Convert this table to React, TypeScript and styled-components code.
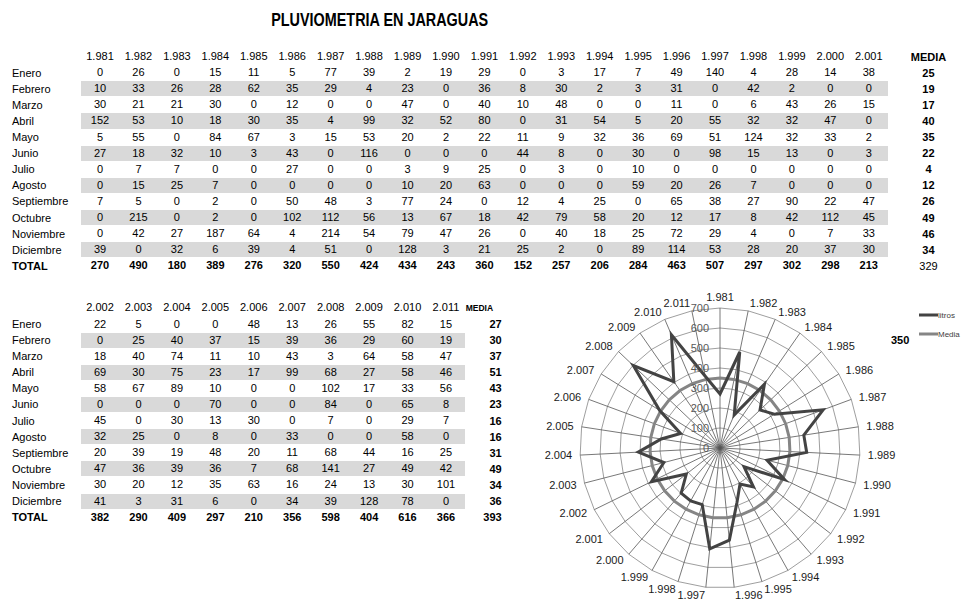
import React from "react";
import styled, { createGlobalStyle } from "styled-components";

const GlobalStyle = createGlobalStyle`
  html, body {
    margin: 0;
    padding: 0;
    background: #fff;
  }
  body {
    font-family: "Liberation Sans", Arial, sans-serif;
    color: #000;
  }
`;

const COL = 38.45;
const ROW = 16.1;

const MONTHS = [
  "Enero", "Febrero", "Marzo", "Abril", "Mayo", "Junio", "Julio",
  "Agosto", "Septiembre", "Octubre", "Noviembre", "Diciembre",
];

const firstYears = Array.from({ length: 21 }, (_, i) => 1981 + i);
const firstRows: number[][] = [
  [0, 26, 0, 15, 11, 5, 77, 39, 2, 19, 29, 0, 3, 17, 7, 49, 140, 4, 28, 14, 38],
  [10, 33, 26, 28, 62, 35, 29, 4, 23, 0, 36, 8, 30, 2, 3, 31, 0, 42, 2, 0, 0],
  [30, 21, 21, 30, 0, 12, 0, 0, 47, 0, 40, 10, 48, 0, 0, 11, 0, 6, 43, 26, 15],
  [152, 53, 10, 18, 30, 35, 4, 99, 32, 52, 80, 0, 31, 54, 5, 20, 55, 32, 32, 47, 0],
  [5, 55, 0, 84, 67, 3, 15, 53, 20, 2, 22, 11, 9, 32, 36, 69, 51, 124, 32, 33, 2],
  [27, 18, 32, 10, 3, 43, 0, 116, 0, 0, 0, 44, 8, 0, 30, 0, 98, 15, 13, 0, 3],
  [0, 7, 7, 0, 0, 27, 0, 0, 3, 9, 25, 0, 3, 0, 10, 0, 0, 0, 0, 0, 0],
  [0, 15, 25, 7, 0, 0, 0, 0, 10, 20, 63, 0, 0, 0, 59, 20, 26, 7, 0, 0, 0],
  [7, 5, 0, 2, 0, 50, 48, 3, 77, 24, 0, 12, 4, 25, 0, 65, 38, 27, 90, 22, 47],
  [0, 215, 0, 2, 0, 102, 112, 56, 13, 67, 18, 42, 79, 58, 20, 12, 17, 8, 42, 112, 45],
  [0, 42, 27, 187, 64, 4, 214, 54, 79, 47, 26, 0, 40, 18, 25, 72, 29, 4, 0, 7, 33],
  [39, 0, 32, 6, 39, 4, 51, 0, 128, 3, 21, 25, 2, 0, 89, 114, 53, 28, 20, 37, 30],
];
const firstMedia = [25, 19, 17, 40, 35, 22, 4, 12, 26, 49, 46, 34];
const firstTotal = [270, 490, 180, 389, 276, 320, 550, 424, 434, 243, 360, 152, 257, 206, 284, 463, 507, 297, 302, 298, 213];

const secondYears = Array.from({ length: 10 }, (_, i) => 2002 + i);
const secondRows: number[][] = [
  [22, 5, 0, 0, 48, 13, 26, 55, 82, 15],
  [0, 25, 40, 37, 15, 39, 36, 29, 60, 19],
  [18, 40, 74, 11, 10, 43, 3, 64, 58, 47],
  [69, 30, 75, 23, 17, 99, 68, 27, 58, 46],
  [58, 67, 89, 10, 0, 0, 102, 17, 33, 56],
  [0, 0, 0, 70, 0, 0, 84, 0, 65, 8],
  [45, 0, 30, 13, 30, 0, 7, 0, 29, 7],
  [32, 25, 0, 8, 0, 33, 0, 0, 58, 0],
  [20, 39, 19, 48, 20, 11, 68, 44, 16, 25],
  [47, 36, 39, 36, 7, 68, 141, 27, 49, 42],
  [30, 20, 12, 35, 63, 16, 24, 13, 30, 101],
  [41, 3, 31, 6, 0, 34, 39, 128, 78, 0],
];
const secondMedia = [27, 30, 37, 51, 43, 23, 16, 16, 31, 49, 34, 36];
const secondTotal = [382, 290, 409, 297, 210, 356, 598, 404, 616, 366];

const yearLabel = (y: number) => `${Math.floor(y / 1000)}.${String(y % 1000).padStart(3, "0")}`;

const Page = styled.div`
  width: 971px;
  height: 611px;
  overflow: hidden;
  display: flex;
  flex-direction: column;
`;

const Title = styled.h1`
  width: 760px;
  height: 40px;
  margin: 0;
  text-align: center;
  line-height: 40px;
  font-size: 18px;
  font-weight: bold;
  span {
    display: inline-block;
    transform: scaleX(0.8);
  }
`;

const Sheet = styled.div<{ $top: number }>`
  margin-top: ${(p) => p.$top}px;
  display: flex;
  flex-direction: column;
  font-size: 11px;
`;

const Row = styled.div`
  display: flex;
  height: ${ROW}px;
  align-items: stretch;
`;

const Label = styled.div<{ $bold?: boolean }>`
  width: 80.8px;
  padding-left: 12px;
  box-sizing: border-box;
  line-height: ${ROW}px;
  font-weight: ${(p) => (p.$bold ? "bold" : "normal")};
`;

const DataStrip = styled.div<{ $cols: number; $striped?: boolean }>`
  display: grid;
  grid-template-columns: repeat(${(p) => p.$cols}, ${COL}px);
  background: ${(p) => (p.$striped ? "#d9d9d9" : "transparent")};
  margin: 0.5px 0;
`;

const Cell = styled.div<{ $bold?: boolean }>`
  text-align: center;
  line-height: ${ROW - 1}px;
  font-weight: ${(p) => (p.$bold ? "bold" : "normal")};
`;

const Media = styled.div<{ $bold?: boolean; $width: number; $gap: number; $align: string; $small?: boolean }>`
  width: ${(p) => p.$width}px;
  margin-left: ${(p) => p.$gap}px;
  text-align: ${(p) => p.$align};
  line-height: ${ROW}px;
  font-weight: ${(p) => (p.$bold ? "bold" : "normal")};
  font-size: ${(p) => (p.$small ? "8.5px" : "11px")};
`;

const Bottom = styled.div`
  margin-top: 11px;
  display: flex;
  align-items: flex-start;
`;

const LeftPane = styled.div`
  width: 540px;
  padding-top: 15px;
`;

type TableProps = {
  years: number[];
  rows: number[][];
  media: number[];
  total: number[];
  totalMedia: number;
  totalMediaBold: boolean;
  top: number;
  mediaLayout: { width: number; gap: number; align: string; small: boolean; headAlign: string };
};

function Table({ years, rows, media, total, totalMedia, totalMediaBold, top, mediaLayout }: TableProps) {
  const m = mediaLayout;
  return (
    <Sheet $top={top}>
      <Row>
        <Label />
        <DataStrip $cols={years.length}>
          {years.map((y) => (
            <Cell key={y}>{yearLabel(y)}</Cell>
          ))}
        </DataStrip>
        <Media $bold $width={m.width} $gap={m.gap} $align={m.headAlign} $small={m.small}>
          MEDIA
        </Media>
      </Row>
      {rows.map((r, i) => (
        <Row key={MONTHS[i]}>
          <Label>{MONTHS[i]}</Label>
          <DataStrip $cols={years.length} $striped={i % 2 === 1}>
            {r.map((v, j) => (
              <Cell key={j}>{v}</Cell>
            ))}
          </DataStrip>
          <Media $bold $width={m.width} $gap={m.gap} $align={m.align}>
            {media[i]}
          </Media>
        </Row>
      ))}
      <Row>
        <Label $bold>TOTAL</Label>
        <DataStrip $cols={years.length}>
          {total.map((v, j) => (
            <Cell key={j} $bold>
              {v}
            </Cell>
          ))}
        </DataStrip>
        <Media $bold={totalMediaBold} $width={m.width} $gap={m.gap} $align={m.align}>
          {totalMedia}
        </Media>
      </Row>
    </Sheet>
  );
}

const ChartSvg = styled.svg`
  display: block;
  flex: none;
  font-family: "Liberation Sans", Arial, sans-serif;
`;

const allYears = [...firstYears, ...secondYears];
const allTotals = [...firstTotal, ...secondTotal];

function RadarChart() {
  const cx = 180;
  const cy = 163;
  const scale = 140 / 700;
  const n = allYears.length;
  const ang = (i: number) => (i * 2 * Math.PI) / n;
  const pt = (i: number, r: number) => [cx + r * Math.sin(ang(i)), cy - r * Math.cos(ang(i))];
  const ring = (r: number) =>
    allYears.map((_, i) => pt(i, r).map((v) => v.toFixed(2)).join(",")).join(" ");
  const series = allTotals
    .map((v, i) => pt(i, v * scale).map((c) => c.toFixed(2)).join(","))
    .join(" ");

  return (
    <ChartSvg width={431} height={326} viewBox="0 0 431 326">
      {[1, 2, 3, 4, 5, 6, 7].map((k) => (
        <polygon key={k} points={ring(k * 20)} fill="none" stroke="#858585" strokeWidth={0.8} />
      ))}
      {allYears.map((_, i) => {
        const [x, y] = pt(i, 140);
        return <line key={i} x1={cx} y1={cy} x2={x} y2={y} stroke="#555" strokeWidth={0.8} />;
      })}
      <polygon points={ring(70)} fill="none" stroke="#858585" strokeWidth={3} />
      <polygon points={series} fill="none" stroke="#434343" strokeWidth={3} strokeLinejoin="miter" />
      {[0, 1, 2, 3, 4, 5, 6, 7].map((k) => (
        <text
          key={k}
          x={169}
          y={cy - k * 20}
          fontSize={11}
          fill="#595959"
          textAnchor="end"
          dominantBaseline="central"
        >
          {k * 100}
        </text>
      ))}
      {allYears.map((y, i) => {
        const [x, yy] = pt(i, 148);
        const s = Math.sin(ang(i));
        const top = i === 0;
        return (
          <text
            key={y}
            x={x}
            y={top ? yy - 3 : yy}
            fontSize={11}
            fill="#1a1a1a"
            textAnchor={top ? "middle" : s > 0 ? "start" : "end"}
            dominantBaseline="central"
          >
            {yearLabel(y)}
          </text>
        );
      })}
      <line x1={379} y1={30} x2={398} y2={30} stroke="#434343" strokeWidth={3} />
      <text x={398} y={30} fontSize={8} fill="#404040" dominantBaseline="central">
        litros
      </text>
      <line x1={379} y1={49} x2={398} y2={49} stroke="#858585" strokeWidth={3} />
      <text x={398} y={49} fontSize={8} fill="#404040" dominantBaseline="central">
        Media
      </text>
      <text x={351} y={55} fontSize={11} fontWeight="bold" fill="#000" dominantBaseline="central">
        350
      </text>
    </ChartSvg>
  );
}

export default function App() {
  return (
    <Page>
      <GlobalStyle />
      <Title>
        <span>PLUVIOMETRIA EN JARAGUAS</span>
      </Title>
      <Table
        years={firstYears}
        rows={firstRows}
        media={firstMedia}
        total={firstTotal}
        totalMedia={329}
        totalMediaBold={false}
        top={8.6}
        mediaLayout={{ width: 40, gap: 20.5, align: "center", small: false, headAlign: "center" }}
      />
      <Bottom>
        <LeftPane>
          <Table
            years={secondYears}
            rows={secondRows}
            media={secondMedia}
            total={secondTotal}
            totalMedia={393}
            totalMediaBold
            top={0}
            mediaLayout={{ width: 36, gap: 0.5, align: "right", small: true, headAlign: "left" }}
          />
        </LeftPane>
        <RadarChart />
      </Bottom>
    </Page>
  );
}
